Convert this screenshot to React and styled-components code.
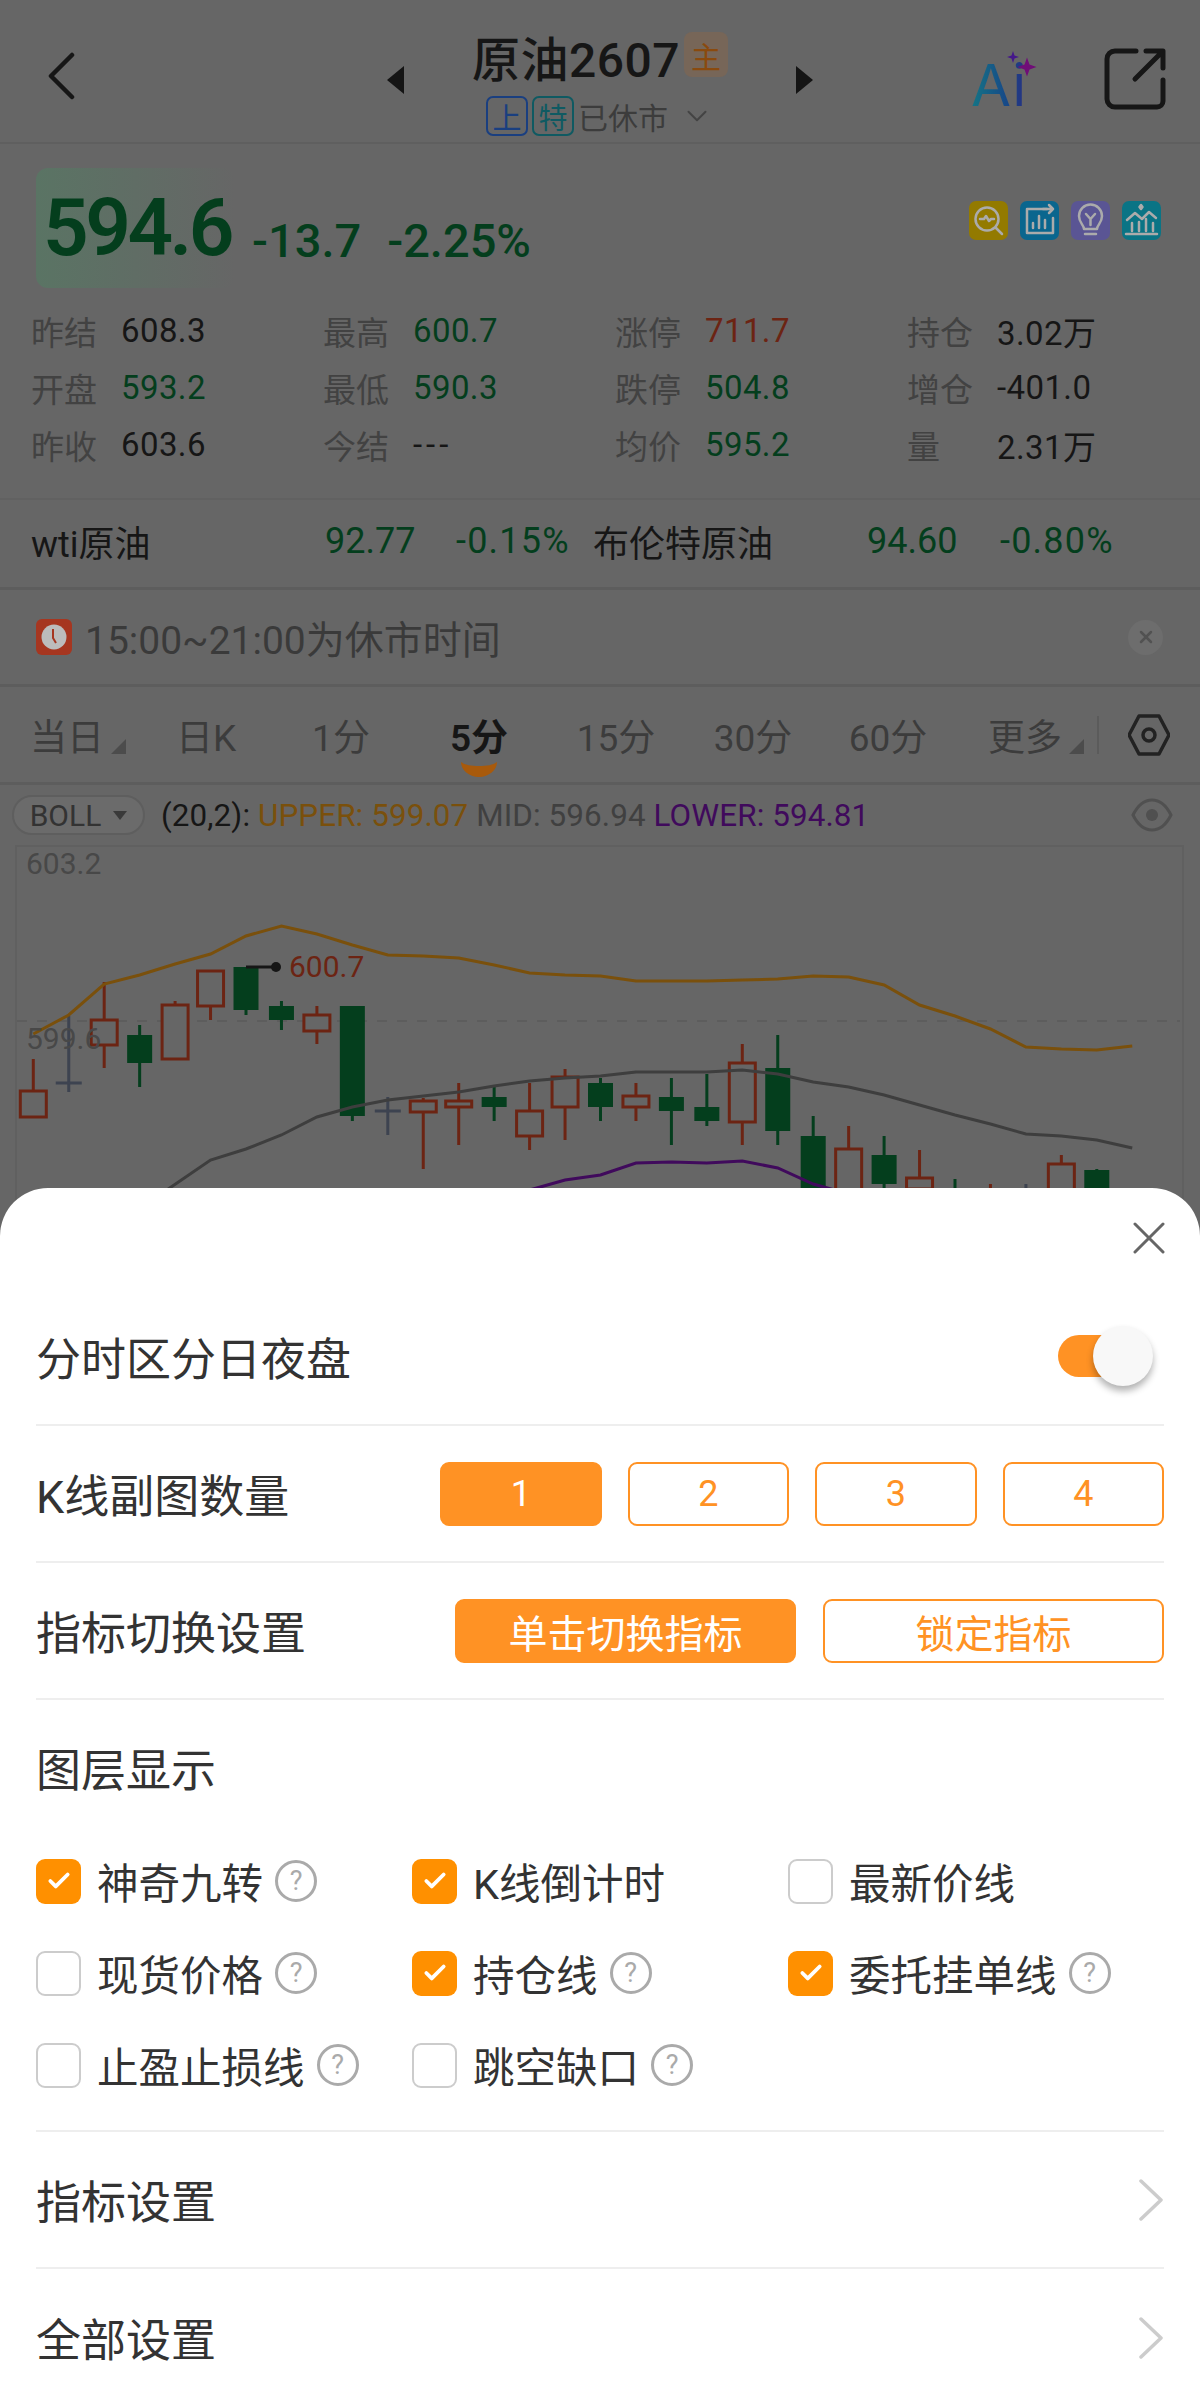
import React from 'react';
import styled, { createGlobalStyle } from 'styled-components';
import { X, ChevronDown, Check } from 'lucide-react';

const Global = createGlobalStyle`
  html, body { margin: 0; padding: 0; background: #666; }
  * { box-sizing: border-box; }
  body { font-family: Roboto, "Noto Sans CJK SC", sans-serif; color: #161616; }
`;

const GREEN = '#043e1d';
const RED = '#6c2413';
const SLATE = '#3d4350';
const AMBER = '#7a500c';
const PURPLE = '#400a5c';
const ORANGE = '#ff9224';

const Screen = styled.div`
  position: relative;
  width: 1200px;
  height: 2400px;
  overflow: hidden;
  background: #666;
`;

/* header */
const Header = styled.header`
  height: 144px;
  display: grid;
  grid-template-columns: 1fr auto 1fr;
  align-items: center;
  padding: 0 34px;
  border-bottom: 2px solid #5f5f5f;
`;
const BackBtn = styled.svg`
  display: block;
  margin: 10px 0 0 13px;
`;
const Center = styled.div`
  display: flex;
  align-items: center;
  gap: 68px;
  margin-top: 27px;
`;
const Tri = styled.span`
  width: 0;
  height: 0;
  margin-top: -10px;
  border-top: 14px solid transparent;
  border-bottom: 14px solid transparent;
  ${p => (p.$left ? 'border-right: 17px solid #141414;' : 'border-left: 17px solid #141414;')}
`;
const TitleCol = styled.div`
  display: flex;
  flex-direction: column;
  align-items: center;
  gap: 8px;
`;
const TitleRow = styled.div`
  display: flex;
  align-items: center;
  gap: 4px;
  height: 54px;
`;
const Title = styled.div`
  font-size: 48px;
  line-height: 54px;
  font-weight: 500;
  letter-spacing: 0.5px;
`;
const MainTag = styled.span`
  width: 44px;
  height: 45px;
  margin-top: -12px;
  border-radius: 8px;
  background: #776658;
  color: #8a4a0e;
  font-size: 30px;
  display: flex;
  align-items: center;
  justify-content: center;
`;
const SubRow = styled.div`
  display: flex;
  align-items: center;
  gap: 4px;
  height: 40px;
  color: #3c3c3c;
  font-size: 30px;
`;
const MarketTag = styled.span`
  width: 42px;
  height: 40px;
  border: 2px solid ${p => p.$color};
  color: ${p => p.$color};
  border-radius: 7px;
  font-size: 29px;
  display: flex;
  align-items: center;
  justify-content: center;
`;
const RightIcons = styled.div`
  justify-self: end;
  display: flex;
  align-items: center;
  gap: 57px;
  margin-top: 16px;
`;
const AiMark = styled.div`
  position: relative;
  width: 76px;
  height: 60px;
  margin-top: 12px;
`;
const AiText = styled.span`
  display: block;
  font-family: Inter, sans-serif;
  font-size: 58px;
  line-height: 60px;
  letter-spacing: 1px;
  font-weight: 400;
  background: linear-gradient(90deg, #147585 0%, #174688 50%, #3f1578 100%);
  -webkit-background-clip: text;
  background-clip: text;
  color: transparent;
`;
const Stars = styled.svg`
  position: absolute;
  left: 27px;
  top: -9px;
`;

/* quote */
const PriceRow = styled.div`
  display: flex;
  align-items: flex-start;
  padding: 24px 39px 0 36px;
  height: 144px;
`;
const PriceBox = styled.div`
  width: 199px;
  height: 120px;
  flex: none;
  border-radius: 12px;
  background: linear-gradient(90deg, #5a7464 0%, #666 100%);
  padding-left: 7px;
  display: flex;
  align-items: center;
`;
const Price = styled.div`
  font-size: 80px;
  font-weight: 600;
  color: ${GREEN};
  letter-spacing: -3.500px;
  line-height: 120px;
`;
const Changes = styled.div`
  display: flex;
  gap: 26px;
  margin-left: 17px;
  margin-top: 45px;
  font-size: 47px;
  font-weight: 500;
  color: ${GREEN};
  line-height: 56px;
`;
const Badges = styled.div`
  margin-left: auto;
  margin-top: 33px;
  display: flex;
  gap: 12px;
`;
const Badge = styled.div`
  width: 39px;
  height: 39px;
  border-radius: 7px;
  background: ${p => p.$bg};
  svg { display: block; }
`;

const Stats = styled.div`
  display: grid;
  grid-template-columns: repeat(4, 292px);
  grid-auto-rows: 57px;
  padding: 14px 0 25px 31px;
  border-bottom: 2px solid #616161;
`;
const Stat = styled.div`
  display: flex;
  align-items: center;
  font-size: 33px;
`;
const StatLabel = styled.span`
  width: 90px;
  color: #424242;
`;
const StatValue = styled.span`
  color: ${p => p.$color || '#161616'};
  letter-spacing: ${p => (p.$dashes ? '4px' : '0.4px')};
`;

const Related = styled.div`
  height: 90px;
  display: grid;
  grid-template-columns: 294px 131px 137px 274px 133px auto;
  align-items: center;
  padding: 0 0 5px 31px;
  font-size: 36px;
  border-bottom: 3px solid #5d5d5d;
`;
const Green = styled.span`
  color: ${GREEN};
  letter-spacing: ${p => (p.$pct ? '1.200px' : '0')};
`;

const Notice = styled.div`
  height: 97px;
  display: flex;
  align-items: center;
  gap: 13px;
  padding: 0 37px 0 36px;
  font-size: 39px;
  color: #3a3a3a;
  border-bottom: 3px solid #5d5d5d;
`;
const NoticeClose = styled.div`
  margin-left: auto;
  width: 35px;
  height: 35px;
  border-radius: 50%;
  background: #6d6d6d;
  color: #525252;
  display: flex;
  align-items: center;
  justify-content: center;
`;

const Tabs = styled.div`
  height: 98px;
  display: flex;
  align-items: center;
  padding-left: 10px;
  border-bottom: 3px solid #5d5d5d;
`;
const TabList = styled.div`
  display: grid;
  grid-template-columns: 136px 120px 150px 126px 148px 126px 144px 152px;
  align-items: center;
`;
const Tab = styled.div`
  position: relative;
  justify-self: center;
  font-size: 37px;
  font-weight: ${p => (p.$active ? 600 : 400)};
  color: ${p => (p.$active ? '#161616' : '#3c3c3c')};
  padding-right: ${p => (p.$arrow ? '22px' : '0')};
`;
const TabArrow = styled.span`
  position: absolute;
  right: 0;
  bottom: 8px;
  width: 0;
  height: 0;
  border-left: 15px solid transparent;
  border-bottom: 15px solid #4c4c4c;
`;
const Smile = styled.svg`
  position: absolute;
  left: 50%;
  top: 54px;
  margin-left: -18px;
`;
const TabSep = styled.div`
  width: 2px;
  height: 38px;
  background: #5b5b5b;
  margin: 0 29px 0 -15px;
`;

const IndicatorRow = styled.div`
  height: 60px;
  display: flex;
  align-items: center;
  padding: 0 27px 0 12px;
`;
const Pill = styled.div`
  width: 133px;
  height: 40px;
  border-radius: 20px;
  border: 2px solid #5e5e5e;
  background: #6b6b6b;
  display: flex;
  align-items: center;
  justify-content: center;
  gap: 12px;
  font-size: 30px;
  color: #333;
  margin-right: 16px;
`;
const PillCaret = styled.span`
  width: 0;
  height: 0;
  border-left: 7px solid transparent;
  border-right: 7px solid transparent;
  border-top: 9px solid #3a3a3a;
`;
const Legend = styled.div`
  font-size: 31.4px;
  letter-spacing: 0.1px;
  white-space: nowrap;
`;
const LegendPart = styled.span`
  color: ${p => p.$color};
`;
const Eye = styled.svg`
  margin-left: auto;
`;

const ChartFrame = styled.div`
  position: relative;
  margin-left: 15px;
  width: 1169px;
  height: 400px;
  border: 2px solid #606060;
  border-bottom: 0;
`;
const ChartSvg = styled.svg`
  display: block;
`;
const AxisLabel = styled.span`
  position: absolute;
  left: ${p => p.$left}px;
  top: ${p => p.$top}px;
  font-size: 30px;
  line-height: 32px;
  color: ${p => p.$color || '#484848'};
`;

/* bottom sheet */
const Sheet = styled.div`
  position: absolute;
  left: 0;
  right: 0;
  bottom: 0;
  height: 1212px;
  background: #fff;
  border-radius: 48px 48px 0 0;
  padding: 0 36px;
  color: #333;
`;
const CloseBar = styled.div`
  height: 100px;
  display: flex;
  justify-content: flex-end;
  padding: 34px 0 0 0;
  svg { display: block; margin-right: -1px; }
`;
const Row = styled.div`
  height: ${p => p.$h || 137}px;
  display: flex;
  align-items: center;
  justify-content: space-between;
  font-size: 45px;
  border-bottom: ${p => (p.$last ? 'none' : '2px solid #eeeeee')};
`;
const Toggle = styled.div`
  position: relative;
  width: 72px;
  height: 42px;
  border-radius: 21px;
  background: ${ORANGE};
  margin-right: 34px;
`;
const Knob = styled.span`
  position: absolute;
  right: -23px;
  top: -9px;
  width: 60px;
  height: 60px;
  border-radius: 50%;
  background: #f8f8f8;
  box-shadow: 0 5px 7px rgba(0, 0, 0, 0.3);
`;
const BtnGroup = styled.div`
  display: flex;
  gap: ${p => p.$gap}px;
`;
const OptBtn = styled.div`
  width: ${p => p.$w}px;
  height: 64px;
  border-radius: 9px;
  border: 2px solid ${ORANGE};
  background: ${p => (p.$on ? ORANGE : '#fff')};
  color: ${p => (p.$on ? '#fff' : ORANGE)};
  font-size: ${p => p.$fs}px;
  display: flex;
  align-items: center;
  justify-content: center;
`;
const LayerTitle = styled.div`
  font-size: 45px;
  line-height: 44px;
  padding-top: 50px;
  margin-bottom: 41px;
`;
const LayerGrid = styled.div`
  display: grid;
  grid-template-columns: repeat(3, 376px);
  grid-auto-rows: 92px;
  padding-bottom: 19px;
  border-bottom: 2px solid #eeeeee;
`;
const Layer = styled.div`
  display: flex;
  align-items: center;
  font-size: 41.5px;
`;
const Box = styled.span`
  width: 45px;
  height: 45px;
  flex: none;
  border-radius: 9px;
  margin-right: 16px;
  border: ${p => (p.$on ? 'none' : '2px solid #cccccc')};
  background: ${p => (p.$on ? '#ff9000' : '#fff')};
  color: #fff;
  display: flex;
  align-items: center;
  justify-content: center;
`;
const Help = styled.span`
  width: 42px;
  height: 42px;
  margin-left: 12px;
  border-radius: 50%;
  border: 3px solid #aaaaaa;
  color: #aaaaaa;
  font-size: 27px;
  line-height: 1;
  display: flex;
  align-items: center;
  justify-content: center;
`;
const NavArrow = styled.svg`
  display: block;
`;

const stats = [
  ['昨结', '608.3'], ['最高', '600.7', GREEN], ['涨停', '711.7', RED], ['持仓', '3.02万'],
  ['开盘', '593.2', GREEN], ['最低', '590.3', GREEN], ['跌停', '504.8', GREEN], ['增仓', '-401.0'],
  ['昨收', '603.6'], ['今结', '---'], ['均价', '595.2', GREEN], ['量', '2.31万'],
];

const tabs = [
  { t: '当日', arrow: true }, { t: '日K' }, { t: '1分' }, { t: '5分', active: true },
  { t: '15分' }, { t: '30分' }, { t: '60分' }, { t: '更多', arrow: true },
];

const layers = [
  { t: '神奇九转', on: true, help: true }, { t: 'K线倒计时', on: true }, { t: '最新价线' },
  { t: '现货价格', help: true }, { t: '持仓线', on: true, help: true }, { t: '委托挂单线', on: true, help: true },
  { t: '止盈止损线', help: true }, { t: '跳空缺口', help: true },
];

// type, wick top, wick bottom, body top, body bottom (full page pixels)
const candles = [
  ['r', 1057, 1115, 1089, 1115], ['d', 1014, 1090, 1081, 1081], ['r', 980, 1066, 1018, 1043],
  ['g', 1023, 1085, 1033, 1061], ['r', 999, 1057, 1003, 1057], ['r', 969, 1018, 969, 1004],
  ['g', 965, 1013, 965, 1008], ['g', 999, 1028, 1004, 1018], ['r', 1004, 1042, 1013, 1029],
  ['g', 1004, 1119, 1004, 1114], ['d', 1095, 1133, 1109, 1109], ['r', 1096, 1167, 1099, 1110],
  ['r', 1081, 1143, 1099, 1105], ['g', 1085, 1119, 1095, 1105], ['r', 1081, 1148, 1109, 1134],
  ['r', 1067, 1138, 1075, 1105], ['g', 1076, 1119, 1081, 1105], ['r', 1081, 1119, 1094, 1105],
  ['g', 1076, 1143, 1095, 1109], ['g', 1072, 1124, 1105, 1119], ['r', 1042, 1143, 1061, 1120],
  ['g', 1033, 1143, 1066, 1129], ['g', 1114, 1210, 1134, 1210], ['r', 1124, 1210, 1147, 1210],
  ['g', 1134, 1187, 1153, 1182], ['r', 1148, 1210, 1176, 1187], ['g', 1177, 1210, 1187, 1210],
  ['r', 1182, 1210, 1210, 1210], ['d', 1182, 1210, 1210, 1210], ['r', 1153, 1210, 1162, 1210],
  ['g', 1167, 1210, 1168, 1210],
];

const xOf = i => 33.3 + i * 35.45;
const upper = [1032, 1013, 982, 973, 962, 952, 934, 924, 932, 943, 953, 954, 956, 963, 971, 973, 974, 979, 979, 979, 978, 977, 974, 975, 983, 1003, 1014, 1027, 1045, 1047, 1048, 1044];
const mid = [[3.6, 1192], [5, 1158], [6, 1147], [7, 1133], [8, 1115], [9, 1105], [10, 1098], [11, 1094], [12, 1090], [13, 1084], [14, 1079], [15, 1076], [16, 1074], [17, 1070], [18, 1070], [19, 1070], [20, 1068], [21, 1072], [22, 1080], [23, 1085], [24, 1093], [25, 1103], [26, 1113], [27, 1122], [28, 1132], [29, 1134], [30, 1138], [31, 1146]];
const lower = [[14, 1188], [15, 1178], [16, 1173], [17, 1161], [18, 1160], [19, 1161], [20, 1159], [21, 1166], [22, 1182], [23, 1192]];

const Candle = ({ c, i }) => {
  const [type, wt, wb, bt, bb] = c;
  const x = xOf(i);
  const color = type === 'r' ? RED : type === 'g' ? GREEN : SLATE;
  return (
    <g>
      <line x1={x} x2={x} y1={wt} y2={wb} stroke={color} strokeWidth="3" />
      {type === 'd' && <line x1={x - 13} x2={x + 13} y1={bt} y2={bt} stroke={color} strokeWidth="3" />}
      {type === 'g' && <rect x={x - 12.5} y={bt} width="25" height={bb - bt} fill={color} />}
      {type === 'r' && <rect x={x - 13} y={bt} width="26" height={bb - bt} fill="#666" stroke={color} strokeWidth="3" />}
    </g>
  );
};

const Chart = () => (
  <ChartSvg width="1165" height="400" viewBox="17 845 1165 400">
    <line x1="17" x2="1180" y1="1019" y2="1019" stroke="#5d5d5d" strokeWidth="2" strokeDasharray="10 10" />
    {candles.map((c, i) => <Candle key={i} c={c} i={i} />)}
    <polyline fill="none" stroke={AMBER} strokeWidth="3" points={upper.map((y, i) => `${xOf(i)},${y}`).join(' ')} />
    <polyline fill="none" stroke="#3e3e3e" strokeWidth="3" points={mid.map(([i, y]) => `${xOf(i)},${y}`).join(' ')} />
    <polyline fill="none" stroke={PURPLE} strokeWidth="3" points={lower.map(([i, y]) => `${xOf(i)},${y}`).join(' ')} />
    <line x1="246" x2="276" y1="965" y2="965" stroke="#161616" strokeWidth="3" />
    <circle cx="276" cy="965" r="5" fill="#161616" />
  </ChartSvg>
);

const BadgeIcon = ({ kind }) => (
  <svg width="39" height="39" viewBox="0 0 39 39" fill="none" stroke="#ababab" strokeWidth="2.5" strokeLinecap="round" strokeLinejoin="round">
    {kind === 'scan' && <><circle cx="18" cy="18" r="11.5" /><path d="M11 18h4l2-3 3 5 2-2h3M27 27l6 6" /></>}
    {kind === 'bars' && <><path d="M27 8H7v24h26V17" /><path d="M13 27v-5M19 27V15M25 27v-8" /><path d="M23 8h10M29 4l4 4-4 4" /></>}
    {kind === 'bulb' && <><path d="M13 28c0-4-5-6-5-13a11.500 11.500 0 0 1 23 0c0 7-5 9-5 13z" /><path d="M15 13l4.500 5 4.500-5M19.500 18v6M14 33h11" /></>}
    {kind === 'trend' && <><path d="M5 19l8-7 7 6 7-7 7 6" /><path d="M19 4l1.500 2 -1.500 2-1.500-2zM4 33h31M10 30v-8M17 30v-9M24 30v-12M31 30v-8" /></>}
  </svg>
);

const ArrowRight = () => (
  <NavArrow width="26" height="42" viewBox="0 0 26 42" fill="none" stroke="#cccccc" strokeWidth="3.5" strokeLinecap="round" strokeLinejoin="round">
    <path d="M3 2l20 19L3 40" />
  </NavArrow>
);

export default function App() {
  return (
    <Screen>
      <Global />
      <Header>
        <BackBtn width="28" height="48" viewBox="0 0 28 48" fill="none" stroke="#161616" strokeWidth="4.500" strokeLinecap="round" strokeLinejoin="round">
          <path d="M25 3L4 24l21 21" />
        </BackBtn>
        <Center>
          <Tri $left />
          <TitleCol>
            <TitleRow>
              <Title>原油2607</Title>
              <MainTag>主</MainTag>
            </TitleRow>
            <SubRow>
              <MarketTag $color="#1a3f80">上</MarketTag>
              <MarketTag $color="#0f5a62">特</MarketTag>
              已休市
              <ChevronDown size={34} strokeWidth={1.4} color="#444" style={{ marginLeft: 8 }} />
            </SubRow>
          </TitleCol>
          <Tri />
        </Center>
        <RightIcons>
          <AiMark>
            <AiText>Ai</AiText>
            <Stars width="50" height="40" viewBox="0 0 50 40">
              <path d="M15 5l1.500 4.500 4.500 1.500-4.500 1.500-1.500 4.500-1.500-4.500-4.500-1.500 4.500-1.500z" fill="#45188a" />
              <path d="M29 11.500l2.500 7 7 2.500-7 2.500-2.500 7-2.500-7-7-2.500 7-2.500z" fill="#700d78" />
            </Stars>
          </AiMark>
          <svg width="62" height="62" viewBox="0 0 62 62" fill="none" stroke="#161616" strokeWidth="5" strokeLinecap="round" strokeLinejoin="round">
            <path d="M32 3H11a8 8 0 0 0-8 8v40a8 8 0 0 0 8 8h42a6 6 0 0 0 6-6V32" />
            <path d="M31 31L57 5M42 3h17v17" />
          </svg>
        </RightIcons>
      </Header>

      <PriceRow>
        <PriceBox><Price>594.6</Price></PriceBox>
        <Changes><span>-13.7</span><span>-2.25%</span></Changes>
        <Badges>
          <Badge $bg="#937a00"><BadgeIcon kind="scan" /></Badge>
          <Badge $bg="#0a668e"><BadgeIcon kind="bars" /></Badge>
          <Badge $bg="#5a5594"><BadgeIcon kind="bulb" /></Badge>
          <Badge $bg="#0a7485"><BadgeIcon kind="trend" /></Badge>
        </Badges>
      </PriceRow>

      <Stats>
        {stats.map(([label, value, color]) => (
          <Stat key={label}>
            <StatLabel>{label}</StatLabel>
            <StatValue $color={color} $dashes={value === '---'}>{value}</StatValue>
          </Stat>
        ))}
      </Stats>

      <Related>
        <span>wti原油</span>
        <Green>92.77</Green>
        <Green $pct>-0.15%</Green>
        <span>布伦特原油</span>
        <Green>94.60</Green>
        <Green $pct>-0.80%</Green>
      </Related>

      <Notice>
        <svg width="36" height="36" viewBox="0 0 36 36">
          <rect width="36" height="36" rx="6" fill="#a63620" />
          <circle cx="18" cy="18" r="12.500" fill="#bcbcbc" />
          <path d="M17 10v9l3 5" fill="none" stroke="#a63620" strokeWidth="2" />
        </svg>
        <span>15:00~21:00为休市时间</span>
        <NoticeClose><X size={20} strokeWidth={3} /></NoticeClose>
      </Notice>

      <Tabs>
        <TabList>
          {tabs.map(tab => (
            <Tab key={tab.t} $active={tab.active} $arrow={tab.arrow}>
              {tab.t}
              {tab.arrow && <TabArrow />}
              {tab.active && (
                <Smile width="36" height="15" viewBox="0 0 36 15">
                  <path d="M0 0c4 3 10 4 18 4s14-1 18-4c0 8-8 15-18 15S0 8 0 0z" fill="#a85a0c" />
                </Smile>
              )}
            </Tab>
          ))}
        </TabList>
        <TabSep />
        <svg width="42" height="42" viewBox="0 0 42 42" fill="none" stroke="#222" strokeWidth="3.500" strokeLinejoin="round">
          <path d="M11 2h20l10 19-10 19H11L1 21z" />
          <circle cx="21" cy="21" r="6" />
        </svg>
      </Tabs>

      <IndicatorRow>
        <Pill>BOLL<PillCaret /></Pill>
        <Legend>
          (20,2): <LegendPart $color={AMBER}>UPPER: 599.07</LegendPart>{' '}
          <LegendPart $color="#404040">MID: 596.94</LegendPart>{' '}
          <LegendPart $color={PURPLE}>LOWER: 594.81</LegendPart>
        </Legend>
        <Eye width="42" height="34" viewBox="0 0 42 34" fill="none" stroke="#505050" strokeWidth="3">
          <path d="M2 17C7 7 13 2 21 2s14 5 19 15c-5 10-11 15-19 15S7 27 2 17z" />
          <circle cx="21" cy="17" r="6" fill="#505050" stroke="none" />
        </Eye>
      </IndicatorRow>

      <ChartFrame>
        <Chart />
        <AxisLabel $left={9} $top={1}>603.2</AxisLabel>
        <AxisLabel $left={9} $top={176}>599.6</AxisLabel>
        <AxisLabel $left={272} $top={104} $color={RED}>600.7</AxisLabel>
      </ChartFrame>

      <Sheet>
        <CloseBar>
          <svg width="32" height="32" viewBox="0 0 32 32" fill="none" stroke="#666" strokeWidth="3" strokeLinecap="round">
            <path d="M2 2l28 28M30 2L2 30" />
          </svg>
        </CloseBar>
        <Row $h={138}>
          <span>分时区分日夜盘</span>
          <Toggle><Knob /></Toggle>
        </Row>
        <Row>
          <span>K线副图数量</span>
          <BtnGroup $gap={26}>
            {[1, 2, 3, 4].map(n => <OptBtn key={n} $w={161.5} $fs={36} $on={n === 1}>{n}</OptBtn>)}
          </BtnGroup>
        </Row>
        <Row>
          <span>指标切换设置</span>
          <BtnGroup $gap={27}>
            <OptBtn $w={341} $fs={39} $on>单击切换指标</OptBtn>
            <OptBtn $w={341} $fs={39}>锁定指标</OptBtn>
          </BtnGroup>
        </Row>
        <LayerTitle>图层显示</LayerTitle>
        <LayerGrid>
          {layers.map(l => (
            <Layer key={l.t}>
              <Box $on={l.on}>{l.on && <Check size={26} strokeWidth={3.5} />}</Box>
              {l.t}
              {l.help && <Help>?</Help>}
            </Layer>
          ))}
        </LayerGrid>
        <Row>
          <span>指标设置</span>
          <ArrowRight />
        </Row>
        <Row $last>
          <span>全部设置</span>
          <ArrowRight />
        </Row>
      </Sheet>
    </Screen>
  );
}
